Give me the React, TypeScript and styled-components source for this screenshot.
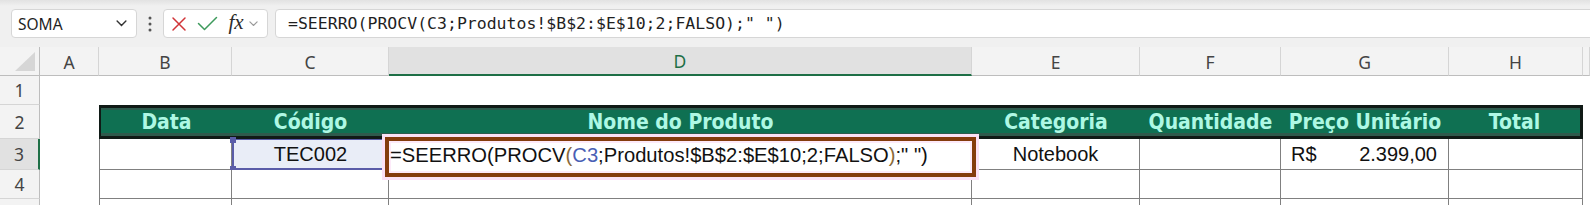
import React from "react";
import styled, { createGlobalStyle, css } from "styled-components";

const GlobalStyle = createGlobalStyle`
  html, body {
    margin: 0;
    padding: 0;
    background: #ffffff;
    width: 1590px;
    height: 205px;
    overflow: hidden;
  }
  * { box-sizing: border-box; }
`;

const Colors = {
  barBg: "#f0f0f0",
  headBg: "#f3f3f3",
  headActive: "#e1e1e1",
  headLine: "#d5d5d5",
  excelGreen: "#1e6f46",
  tableGreen: "#0f7052",
  mint: "#aef8e4",
  grid: "#808080",
  refBlue: "#5a5ca8",
  refFill: "#e9edf7",
  editBrown: "#843c0c",
  pink: "#fbe1f5",
};

const Page = styled.div`
  width: 1590px;
  height: 205px;
  display: flex;
  flex-direction: column;
  overflow: hidden;
`;

/* ---------- formula bar ---------- */

const FormulaBar = styled.div`
  height: 47px;
  flex: none;
  display: flex;
  align-items: center;
  padding-left: 11px;
  background: linear-gradient(#e2e2e2 0px, ${Colors.barBg} 6px);
`;

const Box = styled.div`
  height: 29px;
  background: #ffffff;
  border: 1px solid #d6d6d6;
  border-radius: 4px;
  display: flex;
  align-items: center;
`;

const NameBox = styled(Box)`
  width: 126px;
  padding: 0 9px 0 6px;
  justify-content: space-between;
  font-family: "Noto Sans", "Open Sans", sans-serif;
  font-size: 15.5px;
  color: #1f1f1f;
`;

const Dots = styled.div`
  width: 26px;
  display: flex;
  justify-content: center;
`;

const ButtonGroup = styled(Box)`
  width: 105px;
  padding: 0 0 0 6px;
`;

const IconSlot = styled.span<{ $w: number }>`
  width: ${(p) => p.$w}px;
  display: flex;
  align-items: center;
  justify-content: center;
`;

const Fx = styled.span`
  font-family: "Liberation Serif", "DejaVu Serif", serif;
  font-style: italic;
  font-size: 21px;
  color: #2b2b2b;
  line-height: 1;
  margin-top: -3px;
`;

const FormulaInput = styled(Box)`
  flex: 1;
  margin-left: 7px;
  margin-right: -6px;
  border-radius: 4px 0 0 4px;
  padding-left: 12px;
  font-family: "DejaVu Sans Mono", "Liberation Mono", monospace;
  font-size: 16.5px;
  color: #1f1f1f;
  white-space: pre;
`;

/* ---------- sheet ---------- */

const Sheet = styled.div`
  position: relative;
  flex: none;
  display: grid;
  grid-template-columns: 40px 59px 133px 157px 583px 168px 141px 168px 134px 1fr;
  grid-template-rows: 29px 29px 34px 31px 29px 29px;
  font-family: "Liberation Sans", Arial, sans-serif;
`;

const Corner = styled.div`
  position: relative;
  background: ${Colors.headBg};
  border-right: 1px solid #bdbdbd;
  border-bottom: 1px solid #bdbdbd;
  &::after {
    content: "";
    position: absolute;
    right: 4px;
    bottom: 4px;
    width: 0;
    height: 0;
    border-left: 20px solid transparent;
    border-bottom: 19px solid #d6d6d6;
  }
`;

const ColHeader = styled.div<{ $active?: boolean }>`
  background: ${Colors.headBg};
  border-right: 1px solid ${Colors.headLine};
  border-bottom: 1px solid #bdbdbd;
  display: flex;
  align-items: center;
  justify-content: center;
  font-family: "Noto Sans", "Open Sans", sans-serif;
  font-size: 17.5px;
  color: #444444;
  padding-top: 1px;
  ${(p) =>
    p.$active &&
    css`
      background: ${Colors.headActive};
      color: ${Colors.excelGreen};
      border-bottom: 2px solid ${Colors.excelGreen};
    `}
`;

const RowHeader = styled.div<{ $active?: boolean }>`
  background: ${Colors.headBg};
  border-right: 1px solid #bdbdbd;
  border-bottom: 1px solid ${Colors.headLine};
  display: flex;
  align-items: center;
  justify-content: center;
  font-family: "Noto Sans", "Open Sans", sans-serif;
  font-size: 17.5px;
  color: #444444;
  ${(p) =>
    p.$active &&
    css`
      background: ${Colors.headActive};
      border-right: 2px solid ${Colors.excelGreen};
    `}
`;

const Blank = styled.div`
  background: #ffffff;
`;

const HeadCell = styled.div<{ $first?: boolean; $last?: boolean }>`
  background: ${Colors.tableGreen};
  border-top: 3px solid #101a16;
  border-bottom: 3px solid #101a16;
  box-shadow: inset 0 2px 0 #2d5b4d, inset 0 -3px 0 #2f5a4c;
  display: flex;
  align-items: center;
  justify-content: center;
  font-family: "DejaVu Sans Condensed", "DejaVu Sans", sans-serif;
  font-stretch: condensed;
  font-weight: bold;
  font-size: 21px;
  color: ${Colors.mint};
  white-space: nowrap;
  ${(p) => p.$first && css`border-left: 2px solid #101a16;`}
  ${(p) => p.$last && css`border-right: 3px solid #101a16;`}
`;

const DataCell = styled.div<{ $first?: boolean; $align?: "center" | "between" }>`
  position: relative;
  background: #ffffff;
  border-right: 1px solid ${Colors.grid};
  border-bottom: 1px solid ${Colors.grid};
  display: flex;
  align-items: center;
  justify-content: ${(p) => (p.$align === "between" ? "space-between" : "center")};
  padding: ${(p) => (p.$align === "between" ? "0 11px 0 10px" : "0")};
  font-size: 20px;
  color: #111111;
  ${(p) => p.$first && css`border-left: 1px solid ${Colors.grid};`}
`;

const RefCell = styled(DataCell)`
  background: ${Colors.refFill};
  border: 2px solid ${Colors.refBlue};
  border-top-width: 1px;
  padding-top: 1px;
`;

const Handle = styled.span<{ $pos: "top" | "bottom" }>`
  position: absolute;
  left: -4px;
  ${(p) => (p.$pos === "top" ? "top: -3px;" : "bottom: -4px;")}
  width: 6px;
  height: 6px;
  background: ${Colors.refBlue};
`;

const EditBox = styled.div`
  position: absolute;
  left: 385px;
  top: 90px;
  width: 591px;
  height: 40px;
  border: 4px solid ${Colors.editBrown};
  background: #ffffff;
  box-shadow: 0 0 0 3px ${Colors.pink}, inset 0 0 0 2px #fdeaf9;
  display: flex;
  align-items: center;
  padding-left: 1px;
  padding-bottom: 3px;
  font-size: 20.2px;
  color: #111111;
  white-space: pre;
`;

const Paren = styled.span`
  color: #8a6a3a;
`;

const Ref = styled.span`
  color: #4a5fb5;
`;

/* ---------- icons ---------- */

const Chevron = ({ size = 11, color = "#444" }: { size?: number; color?: string }) => (
  <svg width={size} height={size * 0.6} viewBox="0 0 10 6">
    <path d="M1 1 L5 5 L9 1" fill="none" stroke={color} strokeWidth="1.3" strokeLinecap="round" />
  </svg>
);

const columns = ["A", "B", "C", "D", "E", "F", "G", "H", ""];
const tableHead = ["Data", "Código", "Nome do Produto", "Categoria", "Quantidade", "Preço Unitário", "Total"];

export default function App() {
  return (
    <Page>
      <GlobalStyle />
      <FormulaBar>
        <NameBox>
          <span>SOMA</span>
          <Chevron size={11} color="#333" />
        </NameBox>
        <Dots>
          <svg width="4" height="16" viewBox="0 0 4 16">
            <circle cx="2" cy="2" r="1.5" fill="#555" />
            <circle cx="2" cy="8" r="1.5" fill="#555" />
            <circle cx="2" cy="14" r="1.5" fill="#555" />
          </svg>
        </Dots>
        <ButtonGroup>
          <IconSlot $w={18}>
            <svg width="16" height="16" viewBox="0 0 16 16">
              <path d="M2 2 L14 14 M14 2 L2 14" stroke="#d13438" strokeWidth="1.5" strokeLinecap="round" />
            </svg>
          </IconSlot>
          <IconSlot $w={38}>
            <svg width="21" height="15" viewBox="0 0 21 15">
              <path d="M1.5 7.5 L7.5 13.5 L19.5 1.5" fill="none" stroke="#3e9a5c" strokeWidth="1.5" strokeLinecap="round" strokeLinejoin="round" />
            </svg>
          </IconSlot>
          <IconSlot $w={20}>
            <Fx>fx</Fx>
          </IconSlot>
          <IconSlot $w={14}>
            <Chevron size={9} color="#9a9a9a" />
          </IconSlot>
        </ButtonGroup>
        <FormulaInput>=SEERRO(PROCV(C3;Produtos!$B$2:$E$10;2;FALSO);" ")</FormulaInput>
      </FormulaBar>

      <Sheet>
        <Corner />
        {columns.map((c, i) => (
          <ColHeader key={i} $active={c === "D"}>
            {c}
          </ColHeader>
        ))}

        {/* row 1 */}
        <RowHeader>1</RowHeader>
        {columns.map((_, i) => (
          <Blank key={i} />
        ))}

        {/* row 2: table header */}
        <RowHeader>2</RowHeader>
        <Blank />
        {tableHead.map((h, i) => (
          <HeadCell key={h} $first={i === 0} $last={i === tableHead.length - 1}>
            {h}
          </HeadCell>
        ))}
        <Blank />

        {/* row 3 */}
        <RowHeader $active>3</RowHeader>
        <Blank />
        <DataCell $first />
        <RefCell>
          <Handle $pos="top" />
          <Handle $pos="bottom" />
          TEC002
        </RefCell>
        <DataCell />
        <DataCell>Notebook</DataCell>
        <DataCell />
        <DataCell $align="between">
          <span>R$</span>
          <span>2.399,00</span>
        </DataCell>
        <DataCell />
        <Blank />

        {/* row 4 */}
        <RowHeader>4</RowHeader>
        <Blank />
        <DataCell $first />
        <DataCell />
        <DataCell />
        <DataCell />
        <DataCell />
        <DataCell />
        <DataCell />
        <Blank />

        {/* row 5, cut by the window */}
        <RowHeader />
        <Blank />
        <DataCell $first />
        <DataCell />
        <DataCell />
        <DataCell />
        <DataCell />
        <DataCell />
        <DataCell />
        <Blank />

        <EditBox>
          =SEERRO(PROCV<Paren>(</Paren>
          <Ref>C3</Ref>;Produtos!$B$2:$E$10;2;FALSO<Paren>)</Paren>;" ")
        </EditBox>
      </Sheet>
    </Page>
  );
}
